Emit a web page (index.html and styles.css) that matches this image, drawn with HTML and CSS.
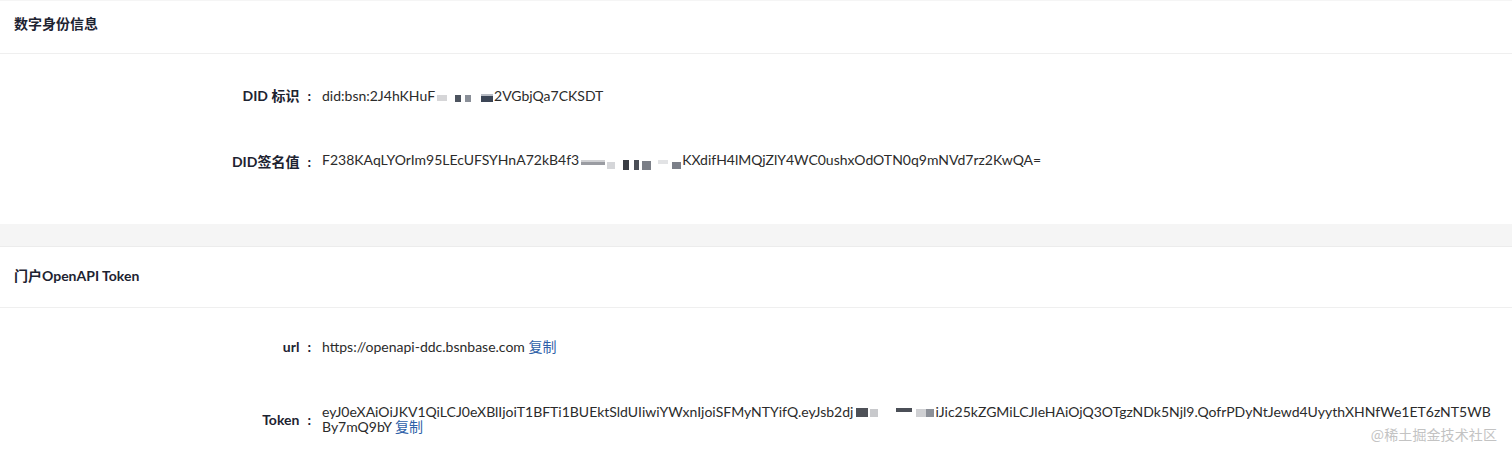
FILE: index.html
```html
<!DOCTYPE html>
<html lang="zh-CN">
<head>
<meta charset="utf-8">
<title>数字身份信息</title>
<link rel="stylesheet" href="styles.css">
</head>
<body>
<div class="page">
  <section class="card">
    <div class="card-head head-first">数字身份信息</div>
    <div class="card-body body-first">
      <div class="row">
        <div class="label">DID 标识</div>
        <div class="value">did:bsn:2J4hKHuF<span class="mosaic m-did"><i class="b1"></i><i class="b2"></i><i class="b3"></i><i class="b4"></i></span>2VGbjQa7CKSDT</div>
      </div>
      <div class="row">
        <div class="label">DID签名值</div>
        <div class="value">F238KAqLYOrIm95LEcUFSYHnA72kB4f3<span class="mosaic m-sig"><i class="s1"></i><i class="s2"></i><i class="s3"></i><i class="s4"></i><i class="s5"></i><i class="s6"></i><i class="s7"></i></span>KXdifH4lMQjZlY4WC0ushxOdOTN0q9mNVd7rz2KwQA=</div>
      </div>
    </div>
  </section>
  <section class="card card-fill">
    <div class="card-head head-second">门户OpenAPI Token</div>
    <div class="card-body body-second">
      <div class="row">
        <div class="label">url</div>
        <div class="value">https://openapi-ddc.bsnbase.com <a class="copy">复制</a></div>
      </div>
      <div class="row">
        <div class="label">Token</div>
        <div class="value token">eyJ0eXAiOiJKV1QiLCJ0eXBlIjoiT1BFTi1BUEktSldUIiwiYWxnIjoiSFMyNTYifQ.eyJsb2dj<span class="mosaic m-tok"><i class="t1"></i><i class="t2"></i><i class="t3"></i><i class="t4"></i><i class="t5"></i></span>iJic25kZGMiLCJleHAiOjQ3OTgzNDk5Njl9.QofrPDyNtJewd4UyythXHNfWe1ET6zNT5WB<br>By7mQ9bY <a class="copy">复制</a></div>
      </div>
    </div>
  </section>
  <div class="watermark">@稀土掘金技术社区</div>
</div>
</body>
</html>
```

FILE: styles.css
```css
* { box-sizing: border-box; }
html, body {
  margin: 0;
  padding: 0;
  background: #f5f5f5;
}
body {
  font-family: "Lato", "Noto Sans CJK SC", sans-serif;
  color: #2b2b2b;
  font-size: 14px;
  height: 459px;
  overflow: hidden;
}
.page {
  position: relative;
  display: flex;
  flex-direction: column;
  padding-top: 1px;
  height: 459px;
}
.card {
  background: #fff;
  flex: none;
}
.card-fill {
  flex: 1;
}
.card + .card {
  margin-top: 22px;
  border-top: 1px solid #ececec;
}
.card-head {
  padding-left: 14px;
  font-size: 14px;
  font-weight: 700;
  color: #1d2331;
  line-height: 20px;
  height: 20px;
  box-sizing: content-box;
  border-bottom: 1px solid #efefef;
}
.head-first {
  padding-top: 13px;
  padding-bottom: 19px;
}
.head-second {
  padding-top: 19px;
  padding-bottom: 21px;
}
.card-body {
  display: flex;
  flex-direction: column;
}
.body-first {
  padding-top: 34px;
  padding-bottom: 54px;
  gap: 49px;
}
.body-second {
  padding-top: 31px;
  gap: 50px;
}
.row {
  display: flex;
  align-items: center;
  line-height: 15px;
}
.label {
  width: 322px;
  flex: none;
  height: 15px;
  text-align: right;
  font-weight: 700;
  color: #1d2331;
}
.label::after {
  content: ":";
  margin: 0 11px 0 8px;
}
.value {
  flex: 1;
  min-width: 0;
  padding-right: 12px;
  word-break: break-all;
  color: #2b2b2b;
}
.copy {
  color: #2e5fa8;
  cursor: pointer;
}
.mosaic {
  display: inline-flex;
  align-items: center;
  height: 10px;
  vertical-align: 0;
}
.mosaic i {
  display: block;
  height: 7px;
}
.m-did .b1 { width: 10px; background: #d6d6d8; margin-left: 2px; height: 6px; }
.m-did .b2 { width: 6px; background: #4d545f; margin-left: 8px; }
.m-did .b3 { width: 6px; background: #8a8f98; margin-left: 4px; }
.m-did .b4 { width: 12px; background: #3c4656; margin-left: 10px; margin-right: 1px; height: 8px; border-top: 2px solid #b8bcc4; }

.m-sig .s1 { width: 24px; background: #9a9ca2; height: 5px; margin-left: 2px; margin-top: -5px; border-top: 2px solid #cfd0d3; }
.m-sig .s2 { width: 8px; background: #d5d6d9; margin-left: 2px; }
.m-sig .s3 { width: 6px; background: #3a3d44; margin-left: 8px; height: 10px; }
.m-sig .s4 { width: 5px; background: #4a4e56; margin-left: 5px; height: 10px; }
.m-sig .s5 { width: 9px; background: #7b7f87; margin-left: 3px; height: 9px; }
.m-sig .s6 { width: 10px; background: #e2e3e5; margin-left: 7px; height: 4px; margin-top: -6px; }
.m-sig .s7 { width: 9px; background: #7c8089; margin-left: 4px; margin-right: 1px; }

.m-tok .t1 { width: 12px; background: #4e5158; margin-left: 3px; height: 9px; }
.m-tok .t2 { width: 8px; background: #c8c9cc; margin-left: 2px; height: 8px; }
.m-tok .t3 { width: 16px; background: #4b4f57; margin-left: 18px; height: 4px; margin-top: -6px; }
.m-tok .t4 { width: 10px; background: #cfd0d3; margin-left: 4px; height: 8px; }
.m-tok .t5 { width: 8px; background: #8c9098; margin-right: 1px; height: 8px; }

.watermark {
  position: absolute;
  right: 15px;
  bottom: 16px;
  font-family: "Noto Sans CJK SC", sans-serif;
  font-size: 14px;
  line-height: 18px;
  color: #c3c3c3;
  letter-spacing: 0.1px;
}
```
